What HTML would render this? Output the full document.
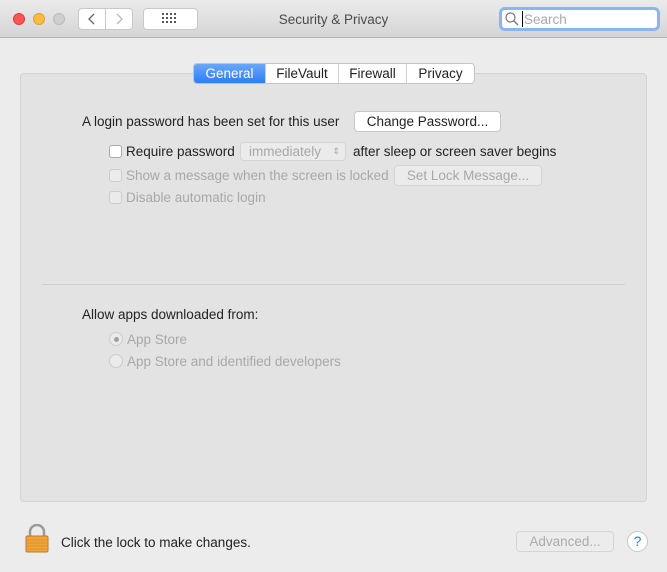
<!DOCTYPE html>
<html><head><style>
*{box-sizing:border-box;margin:0;padding:0}
body{width:667px;height:572px;background:#ececec;font-family:"Liberation Sans",sans-serif;font-size:13.5px;color:#222;position:relative;overflow:hidden}
.abs{position:absolute}
.tb{left:0;top:0;width:667px;height:38px;background:linear-gradient(#ebebeb,#d5d5d5);border-bottom:1px solid #b5b5b5}
.dot{width:12px;height:12px;border-radius:50%;top:13px}
.btn{background:#fff;border:1px solid #c8c8c8;border-radius:4px}
.panel{left:20px;top:73px;width:627px;height:429px;background:#e3e3e3;border:1px solid #d3d3d3;border-radius:4px}
.tabs{left:193px;top:63px;height:21px;display:flex;border:1px solid #c5c5c5;border-radius:4px;background:#fff;overflow:hidden}
.tabs div{height:19px;line-height:19px;text-align:center;border-left:1px solid #d0d0d0}
.cb{width:13px;height:13px;border:1px solid #aaa;border-radius:3px;background:#fff}
.dis{color:#a8a8a8}
.cbd{border-color:#ccc;background:#ebebeb}
.rad{width:14px;height:14px;border:1px solid #ccc;border-radius:50%;background:#ebebeb}
</style></head><body>
<div class="abs tb"></div>
<div class="abs dot" style="left:13px;background:#fc5753;border:1px solid #de3f3b"></div>
<div class="abs dot" style="left:33px;background:#fdbc40;border:1px solid #de9f34"></div>
<div class="abs dot" style="left:53px;background:#cfcfcf;border:1px solid #bbb"></div>
<div class="abs btn" style="left:78px;top:8px;width:28px;height:22px;border-radius:4px 0 0 4px"></div>
<div class="abs btn" style="left:105px;top:8px;width:28px;height:22px;border-radius:0 4px 4px 0"></div>
<svg class="abs" style="left:78px;top:8px" width="55" height="22"><path d="M16 6l-5 5 5 5" fill="none" stroke="#666" stroke-width="1.3"/><path d="M39 6l5 5-5 5" fill="none" stroke="#bbb" stroke-width="1.3"/></svg>
<div class="abs btn" style="left:143px;top:8px;width:55px;height:22px"></div>
<svg class="abs" style="left:162px;top:13px" width="16" height="12"><g fill="#555"><rect x="0" y="0" width="2" height="2"/><rect x="4" y="0" width="2" height="2"/><rect x="8" y="0" width="2" height="2"/><rect x="12" y="0" width="2" height="2"/><rect x="0" y="4" width="2" height="2"/><rect x="4" y="4" width="2" height="2"/><rect x="8" y="4" width="2" height="2"/><rect x="12" y="4" width="2" height="2"/><rect x="0" y="8" width="2" height="2"/><rect x="4" y="8" width="2" height="2"/><rect x="8" y="8" width="2" height="2"/><rect x="12" y="8" width="2" height="2"/></g></svg>
<div class="abs" style="left:0;width:667px;top:12px;text-align:center;color:#4a4a4a">Security &amp; Privacy</div>
<div class="abs" style="left:499px;top:7px;width:161px;height:24px;border:3px solid #8fb4ec;border-radius:6px;background:#fff"></div>
<svg class="abs" style="left:505px;top:12px" width="14" height="14"><circle cx="5.5" cy="5.5" r="4.5" fill="none" stroke="#777" stroke-width="1.2"/><line x1="9" y1="9" x2="13" y2="13" stroke="#777" stroke-width="1.4"/></svg>
<div class="abs" style="left:522px;top:11px;width:1px;height:16px;background:#000"></div>
<div class="abs" style="left:524px;top:12px;color:#aaa">Search</div>
<div class="abs panel"></div>
<div class="abs tabs">
<div style="width:71px;border:0;background:linear-gradient(#6aa7fb,#2f7cf6);color:#fff">General</div>
<div style="width:73px">FileVault</div>
<div style="width:68px">Firewall</div>
<div style="width:68px">Privacy</div>
</div>
<div class="abs" style="left:82px;top:114px">A login password has been set for this user</div>
<div class="abs btn" style="left:354px;top:111px;width:147px;height:21px;text-align:center;line-height:19px">Change Password...</div>
<div class="abs cb" style="left:109px;top:145px"></div>
<div class="abs" style="left:126px;top:144px">Require password</div>
<div class="abs" style="left:240px;top:142px;width:106px;height:19px;border:1px solid #d5d5d5;border-radius:4px;background:#ebebeb;color:#a8a8a8;padding-left:8px;line-height:17px">immediately<span style="position:absolute;right:5px;font-size:9px">⇕</span></div>
<div class="abs" style="left:353px;top:144px">after sleep or screen saver begins</div>
<div class="abs cb cbd" style="left:109px;top:169px"></div>
<div class="abs dis" style="left:126px;top:168px">Show a message when the screen is locked</div>
<div class="abs" style="left:394px;top:165px;width:148px;height:21px;border:1px solid #d5d5d5;border-radius:4px;background:#ebebeb;color:#a8a8a8;text-align:center;line-height:19px">Set Lock Message...</div>
<div class="abs cb cbd" style="left:109px;top:191px"></div>
<div class="abs dis" style="left:126px;top:190px">Disable automatic login</div>
<div class="abs" style="left:42px;top:284px;width:583px;height:1px;background:#cfcfcf"></div>
<div class="abs" style="left:82px;top:307px">Allow apps downloaded from:</div>
<div class="abs rad" style="left:109px;top:332px"><div style="width:5px;height:5px;border-radius:50%;background:#a0a0a0;margin:3.5px"></div></div>
<div class="abs dis" style="left:127px;top:332px">App Store</div>
<div class="abs rad" style="left:109px;top:354px"></div>
<div class="abs dis" style="left:127px;top:354px">App Store and identified developers</div>
<svg class="abs" style="left:24px;top:524px" width="26" height="30"><path d="M6 12V8a7 7 0 0 1 14 0v4" fill="none" stroke="#9a9a9a" stroke-width="2.5"/><rect x="2" y="12" width="22" height="16" rx="1.5" fill="#f0a43a" stroke="#c07a20"/><g stroke="#d68a28" stroke-width="0.7"><line x1="3" y1="16" x2="23" y2="16"/><line x1="3" y1="19" x2="23" y2="19"/><line x1="3" y1="22" x2="23" y2="22"/><line x1="3" y1="25" x2="23" y2="25"/></g></svg>
<div class="abs" style="left:61px;top:535px">Click the lock to make changes.</div>
<div class="abs" style="left:516px;top:531px;width:98px;height:21px;border:1px solid #d5d5d5;border-radius:4px;background:#ececec;color:#aaa;text-align:center;line-height:19px">Advanced...</div>
<div class="abs" style="left:627px;top:531px;width:21px;height:21px;border:1px solid #c8c8c8;border-radius:50%;background:#fff;color:#2f7cf6;text-align:center;line-height:19px;font-size:14px">?</div>
</body></html>
